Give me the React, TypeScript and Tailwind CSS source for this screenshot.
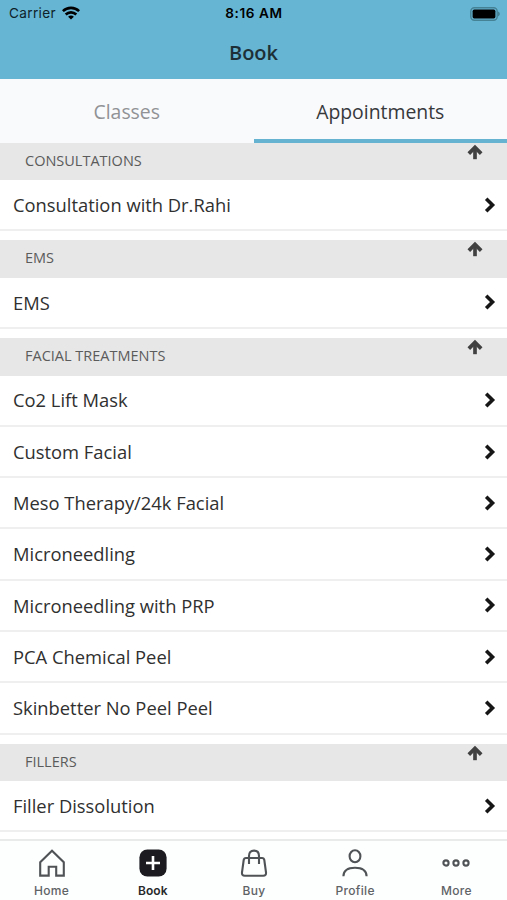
import React from 'react';

const sections = [
  { title: 'CONSULTATIONS', items: ['Consultation with Dr.Rahi'] },
  { title: 'EMS', items: ['EMS'] },
  {
    title: 'FACIAL TREATMENTS',
    items: [
      'Co2 Lift Mask',
      'Custom Facial',
      'Meso Therapy/24k Facial',
      'Microneedling',
      'Microneedling with PRP',
      'PCA Chemical Peel',
      'Skinbetter No Peel Peel',
    ],
  },
  { title: 'FILLERS', items: ['Filler Dissolution'] },
];

const StatusBar: React.FC = () => (
  <div className="grid grid-cols-3 items-center h-[27px] pl-[9px] pr-[7px] font-['Inter'] text-[13.6px] text-black">
    <div className="flex items-center gap-[6px]">
      <span className="tracking-[0.35px] text-[#0e2229]">Carrier</span>
      <svg width="18" height="14" viewBox="0 0 18 14" fill="none" stroke="currentColor" strokeWidth="2.6">
        <path d="M0.9 5.2C5.4 0.7 12.6 0.7 17.1 5.2" />
        <path d="M3.7 8.5C6.7 5.6 11.3 5.6 14.3 8.5" />
        <path d="M9 13.6L6.1 10.7C7.8 9.1 10.2 9.1 11.9 10.7Z" fill="currentColor" stroke="none" />
      </svg>
    </div>
    <span className="text-center font-semibold tracking-[0.6px] -ml-px">8:16 AM</span>
    <svg className="justify-self-end" width="30" height="14" viewBox="0 0 30 14">
      <rect x="0.8" y="0.8" width="26.4" height="12.4" rx="3.6" fill="none" stroke="#458295" strokeWidth="1.4" />
      <rect x="2.6" y="2.6" width="22.8" height="8.8" rx="1.6" fill="#000" />
      <path d="M28 4.6C30.4 5.4 30.4 8.4 28 9.2Z" fill="#458295" />
    </svg>
  </div>
);

const ArrowUp: React.FC = () => (
  <svg className="mt-[1px]" width="16" height="16" viewBox="0 0 16 16" fill="none" stroke="#414141" strokeWidth="3.7">
    <path d="M8 15.2V4" />
    <path d="M1.8 9.6L8 3.4L14.2 9.6" />
  </svg>
);

const Chevron: React.FC = () => (
  <svg width="12" height="16" viewBox="0 0 12 16" fill="none" stroke="#161616" strokeWidth="3.6">
    <path d="M2.2 1.8L8.5 8L2.2 14.2" />
  </svg>
);

const tabs = [
  {
    label: 'Home',
    icon: <path d="M2.2 13.3L14 1.7L25.8 13.3V26.6H18.2V17.8H10.7V26.6H2.2Z" />,
  },
  {
    label: 'Book',
    icon: (
      <>
        <rect x="0.4" y="0.4" width="27.2" height="27.2" rx="8" fill="#1c1c20" stroke="none" />
        <path d="M14 7V21M7 14H21" stroke="#fff" strokeWidth="2.6" />
      </>
    ),
  },
  {
    label: 'Buy',
    icon: (
      <>
        <path d="M6 9H22Q24 9 24.3 11L26 23.3Q26.4 26.8 23.2 26.8H4.8Q1.6 26.8 2 23.3L3.7 11Q4 9 6 9Z" />
        <path d="M9 15V7Q9 1.6 14 1.6Q19 1.6 19 7V15" />
      </>
    ),
  },
  {
    label: 'Profile',
    icon: (
      <>
        <ellipse cx="14" cy="7.3" rx="5.4" ry="6" />
        <path d="M2.4 27.2C2.6 21.6 6.6 18.7 14 18.7S25.4 21.6 25.6 27.2" />
      </>
    ),
  },
  {
    label: 'More',
    icon: (
      <>
        <circle cx="4" cy="14" r="2.6" />
        <circle cx="14" cy="14" r="2.6" />
        <circle cx="24" cy="14" r="2.6" />
      </>
    ),
  },
];

const TabBar: React.FC = () => (
  <nav className="grid grid-cols-5 h-[61px] shrink-0 border-t-2 border-[#e9eaea] bg-[#fdfefe] pt-[8px] pl-px font-['Inter']">
    {tabs.map((tab) => (
      <div key={tab.label} className="flex flex-col items-center">
        <svg width="28" height="28" viewBox="0 0 28 28" fill="none" stroke="#505356" strokeWidth="2.1">
          {tab.icon}
        </svg>
        <span
          className={
            tab.label === 'Book'
              ? 'mt-[6px] text-[12px] leading-[16px] font-semibold tracking-[0.1px] text-[#27292b]'
              : 'mt-[6px] text-[12px] leading-[16px] font-medium tracking-[0.3px] text-[#606366]'
          }
        >
          {tab.label}
        </span>
      </div>
    ))}
  </nav>
);

const App: React.FC = () => {
  return (
    <div className="flex flex-col h-[900px] w-[507px] overflow-hidden bg-white font-['Open_Sans',sans-serif]">
      <header className="h-[79px] shrink-0 bg-[#66b5d3]">
        <StatusBar />
        <h1 className="text-center text-[20px] leading-[52px] font-semibold text-[#1d3038]">Book</h1>
      </header>

      <div className="grid grid-cols-2 h-[63.5px] shrink-0 bg-[#f9fafc] text-center text-[19.4px] leading-[59px]">
        <div className="pt-[3px] text-[#919296]">Classes</div>
        <div className="pt-[3px] h-[63.5px] border-b-4 border-[#66b3d1] text-[#37383b]">Appointments</div>
      </div>

      <main className="flex-1 overflow-hidden">
        {sections.map((section) => (
          <section key={section.title} className="mb-[9px]">
            <div className="flex justify-between h-[37.5px] bg-[#e7e7e7] pl-[25px] pr-[24px]">
              <h2 className="text-[14.5px] leading-[36px] text-[#5b5b5b]">{section.title}</h2>
              <ArrowUp />
            </div>
            {section.items.map((item) => (
              <div
                key={item}
                className="flex items-center justify-between h-[51.3px] border-b-2 border-[#efefef] pl-[13px] pr-[11px] text-[18.35px] text-[#303030]"
              >
                <span>{item}</span>
                <Chevron />
              </div>
            ))}
          </section>
        ))}
      </main>

      <TabBar />
    </div>
  );
};

export default App;
